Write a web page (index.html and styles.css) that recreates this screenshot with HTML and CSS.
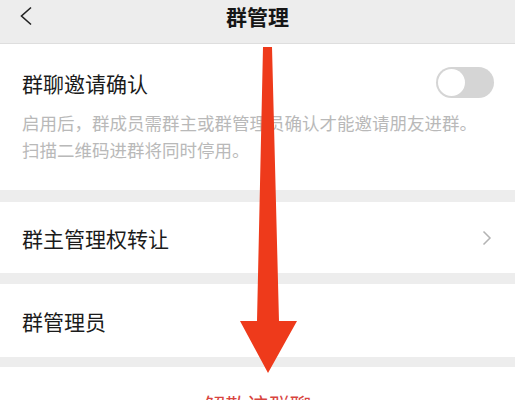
FILE: index.html
```html
<!DOCTYPE html>
<html lang="zh-CN">
<head>
    <meta charset="UTF-8">
    <meta name="viewport" content="width=device-width, initial-scale=1.0">
    <title>群管理</title>
    <link rel="stylesheet" href="styles.css">
</head>
<body>

    <div class="page">
        <!-- Шапка -->
        <div class="nav">
            <svg class="back" width="14" height="20" viewBox="0 0 14 20">
                <polyline points="12,1.5 2.5,10 12,18.5" fill="none" stroke="#222" stroke-width="1.6"/>
            </svg>
            <div class="title">群管理</div>
            <div></div>
        </div>

        <div class="card invite">
            <div class="invite-head">
                <span class="label">群聊邀请确认</span>
                <span class="switch"><span class="knob"></span></span>
            </div>
            <p class="hint">启用后，群成员需群主或群管理员确认才能邀请朋友进群。<br>扫描二维码进群将同时停用。</p>
        </div>

        <div class="card row row-owner">
            <span class="label">群主管理权转让</span>
            <svg class="more" width="10" height="16" viewBox="0 0 10 16">
                <polyline points="1.5,1.5 8,8 1.5,14.5" fill="none" stroke="#b3b3b3" stroke-width="1.5"/>
            </svg>
        </div>

        <div class="card row row-admin">
            <span class="label">群管理员</span>
        </div>

        <div class="card danger">解散该群聊</div>

        <!-- Стрелка поверх -->
        <svg class="arrow" width="515" height="400" viewBox="0 0 515 400">
            <polygon points="263,47 272,47 279,321 297,321 268,373 240,321 257,321" fill="#ee3a1b"/>
        </svg>
    </div>

</body>
</html>
```

FILE: styles.css
```css
body {
    margin: 0;
    background-color: #ededed;
    font-family: "Noto Sans CJK SC", "Noto Sans", sans-serif;
    color: #1b1b1b;
}
.page {
    position: relative;
    width: 515px;
    height: 400px;
    overflow: hidden;
}
.nav {
    display: grid;
    grid-template-columns: 1fr auto 1fr;
    align-items: start;
    height: 43px;
    border-bottom: 1px solid #dedede;
    background-color: #ededed;
}
.back {
    margin: 6px 0 0 19px;
}
.title {
    font-size: 21px;
    font-weight: bold;
    line-height: 32px;
    color: #161616;
}
.card {
    background-color: #fff;
}
.label {
    font-size: 21px;
    line-height: 30px;
}
.invite {
    padding: 23px 21px 27px 22px;
}
.invite-head {
    display: flex;
    justify-content: space-between;
    align-items: center;
}
.switch {
    position: relative;
    width: 58px;
    height: 31px;
    border-radius: 16px;
    background-color: #d5d5d5;
}
.knob {
    position: absolute;
    top: 2px;
    left: 2px;
    width: 27px;
    height: 27px;
    border-radius: 50%;
    background-color: #fff;
}
.hint {
    margin: 11px 0 0;
    font-size: 17.5px;
    line-height: 27px;
    color: #b9b9b9;
    white-space: nowrap;
}
.row {
    display: flex;
    justify-content: space-between;
    align-items: center;
    padding: 0 23px 0 22px;
}
.row-owner {
    margin-top: 12px;
    height: 71px;
}
.row-admin {
    margin-top: 11px;
    height: 73px;
}
.danger {
    margin-top: 10px;
    padding-top: 23px;
    height: 60px;
    text-align: center;
    font-size: 21.5px;
    line-height: 30px;
    color: #d8453f;
}
.arrow {
    position: absolute;
    top: 0;
    left: 0;
    pointer-events: none;
}
```
